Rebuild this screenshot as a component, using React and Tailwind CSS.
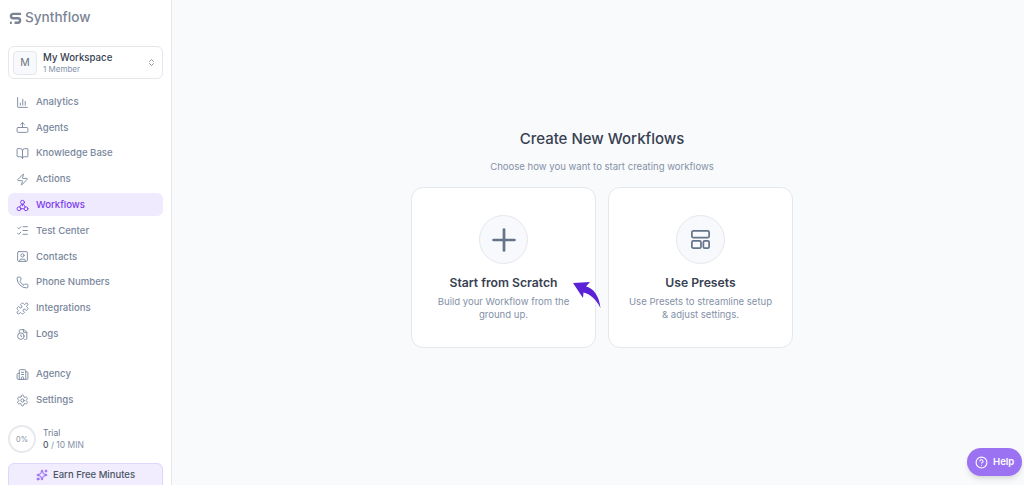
import React from "react";
import {
  BookOpen,
  Building2,
  ChevronsUpDown,
  CircleHelp,
  ListChecks,
  Phone,
  Plus,
  Puzzle,
  Settings,
  Sparkles,
  SquareUser,
  Zap,
} from "lucide-react";

const Svg = ({ children, className = "" }) => (
  <svg
    viewBox="0 0 24 24"
    fill="none"
    stroke="currentColor"
    strokeWidth="2"
    strokeLinecap="round"
    strokeLinejoin="round"
    className={className}
  >
    {children}
  </svg>
);

const BarsIcon = (props) => (
  <Svg {...props}>
    <path d="M3 3v17a1 1 0 0 0 1 1h17" />
    <path d="M8 17v-4" />
    <path d="M12.5 17V6" />
    <path d="M17 17v-7" />
  </Svg>
);

const AgentIcon = (props) => (
  <Svg {...props}>
    <rect x="2" y="12" width="20" height="9" rx="2" />
    <path d="M12 12V3" />
    <path d="M8.5 6.5 12 3l3.5 3.5" />
  </Svg>
);

const WorkflowIcon = (props) => (
  <Svg {...props}>
    <circle cx="12" cy="6" r="3.6" />
    <circle cx="5.5" cy="18" r="3.6" />
    <circle cx="18.5" cy="18" r="3.6" />
    <path d="M12 9.5v3M9 18h6M10 10l-3 5M14 10l3 5" />
  </Svg>
);

const LogsIcon = (props) => (
  <Svg {...props}>
    <path d="M6 8V5a2 2 0 0 1 2-2h7l5 5v11a2 2 0 0 1-2 2h-2" />
    <path d="M14 3v5h6" />
    <circle cx="9" cy="15" r="6" />
    <path d="M9 12.5V15l1.5 1" />
  </Svg>
);

const PresetIcon = (props) => (
  <Svg {...props}>
    <rect x="3" y="3" width="18" height="7" rx="1.5" />
    <rect x="3" y="13.5" width="9.5" height="7.5" rx="1.5" />
    <rect x="15" y="13.5" width="6" height="7.5" rx="1.5" />
  </Svg>
);

const mainLinks = [
  { label: "Analytics", icon: BarsIcon },
  { label: "Agents", icon: AgentIcon },
  { label: "Knowledge Base", icon: BookOpen },
  { label: "Actions", icon: Zap },
  { label: "Workflows", icon: WorkflowIcon, active: true },
  { label: "Test Center", icon: ListChecks },
  { label: "Contacts", icon: SquareUser },
  { label: "Phone Numbers", icon: Phone },
  { label: "Integrations", icon: Puzzle },
  { label: "Logs", icon: LogsIcon },
];

const bottomLinks = [
  { label: "Agency", icon: Building2 },
  { label: "Settings", icon: Settings },
];

const NavItem = ({ label, icon: Icon, active }) => (
  <a
    className={`flex h-[23px] shrink-0 items-center gap-[7px] rounded-md pl-[8px] pt-[1px] text-[9.6px] font-medium ${
      active ? "bg-[#efeafd] text-[#7c3aed]" : "text-[#7a879d]"
    }`}
  >
    <Icon className="h-[13px] w-[13px] shrink-0 [stroke-width:1.7]" />
    {label}
  </a>
);

const Card = ({ icon, title, lines }) => (
  <div className="flex h-[161px] w-[185px] flex-col items-center rounded-xl border border-[#e5e7eb] bg-white pt-[27px]">
    <div className="flex h-[49px] w-[49px] items-center justify-center rounded-full border border-[#e5e7eb] bg-[#f8f9fc] text-[#64748b]">
      {icon}
    </div>
    <h3 className="mt-[9px] text-[12.2px] leading-[20px] font-semibold text-[#374151]">
      {title}
    </h3>
    <p className="mt-[2px] text-center text-[9.55px] leading-[13px] text-[#8491a7]">
      {lines[0]}
      <br />
      {lines[1]}
    </p>
  </div>
);

export default function App() {
  return (
    <div className="relative flex h-[485px] w-[1024px] overflow-hidden bg-[#f9fafc] font-['Inter',sans-serif]">
      {/* Sidebar */}
      <aside className="flex h-[485px] w-[172px] shrink-0 flex-col overflow-hidden border-r border-[#e5e7eb] bg-white px-[8px]">
        <div className="flex h-[36px] shrink-0 items-center gap-[3px] pl-[1px] text-[#7b8494]">
          <svg viewBox="0 0 14 14" className="h-[13px] w-[13px]" fill="none" stroke="currentColor" strokeWidth="2.6">
            <path d="M13 2H4.5a2.4 2.4 0 0 0 0 4.8h5a2.4 2.4 0 0 1 0 4.8H6" />
            <path d="M1 11.6h2" />
          </svg>
          <span className="text-[13.6px] leading-none font-medium">Synthflow</span>
        </div>

        <div className="mt-[10px] flex h-[33px] shrink-0 items-center rounded-md border border-[#e5e7eb] bg-white pl-[4px] pr-[6px]">
          <div className="flex h-[24px] w-[24px] items-center justify-center rounded border border-[#e5e7eb] bg-[#f8f9fc] text-[10.5px] text-[#6b7280]">
            M
          </div>
          <div className="ml-[6px] flex-1">
            <div className="text-[9.66px] leading-[13px] font-medium text-[#374151]">My Workspace</div>
            <div className="text-[8px] leading-[11px] text-[#8491a7]">1 Member</div>
          </div>
          <ChevronsUpDown className="h-[9px] w-[9px] text-[#6b7280]" />
        </div>

        <nav className="mt-[11px] flex shrink-0 flex-col gap-[2.8px]">
          {mainLinks.map((link) => (
            <NavItem key={link.label} {...link} />
          ))}
        </nav>

        <nav className="mt-[17px] flex shrink-0 flex-col gap-[3px]">
          {bottomLinks.map((link) => (
            <NavItem key={link.label} {...link} />
          ))}
        </nav>

        <div className="mt-[14px] flex shrink-0 items-center gap-[7px]">
          <div className="flex h-[28px] w-[28px] items-center justify-center rounded-full border-2 border-[#e8e9ed] text-[7.5px] text-[#8491a7]">
            0%
          </div>
          <div>
            <div className="text-[8.5px] leading-[12px] text-[#6b7a90]">Trial</div>
            <div className="text-[8.5px] leading-[12px] text-[#8491a7]">
              <span className="font-medium text-[#4b5563]">0</span> / 10 MIN
            </div>
          </div>
        </div>

        <button className="mt-[10px] flex h-[28px] shrink-0 items-center justify-center gap-[5px] rounded-md border border-[#ddd6fe] bg-[#f1ecfe] pb-[4px] text-[9.5px] font-medium text-[#4b5563]">
          <Sparkles className="h-[12px] w-[12px] text-[#8b5cf6]" />
          Earn Free Minutes
        </button>
      </aside>

      {/* Main */}
      <main className="flex flex-1 flex-col items-center pl-[8px] pt-[129px]">
        <h1 className="text-[15px] leading-[20px] font-medium text-[#374151]">Create New Workflows</h1>
        <p className="mt-[11px] text-[9.55px] leading-[13px] text-[#8491a7]">
          Choose how you want to start creating workflows
        </p>
        <div className="mt-[14px] flex gap-[12px]">
          <div className="relative">
            <Card
              icon={<Plus className="h-[36px] w-[36px]" strokeWidth={1.8} />}
              title="Start from Scratch"
              lines={["Build your Workflow from the", "ground up."]}
            />
            <svg viewBox="0 0 30 30" className="absolute left-[161px] top-[94px] h-[30px] w-[30px]">
              <path
                d="M1 2 18 1l-4 4.5C21 7 27 14 28.5 27 24 18 18 13 11.5 11.5L11 17Z"
                fill="#5b21d6"
              />
            </svg>
          </div>
          <Card
            icon={<PresetIcon className="h-[23px] w-[23px] [stroke-width:1.8]" />}
            title="Use Presets"
            lines={["Use Presets to streamline setup", "& adjust settings."]}
          />
        </div>
      </main>

      {/* Help button */}
      <button className="absolute left-[967px] top-[448px] flex h-[28px] w-[55px] items-center gap-[5px] rounded-full bg-[#9b72f2] pl-[8px] text-[9.6px] font-semibold text-white shadow-md">
        <CircleHelp className="h-[13px] w-[13px]" />
        Help
      </button>
    </div>
  );
}
